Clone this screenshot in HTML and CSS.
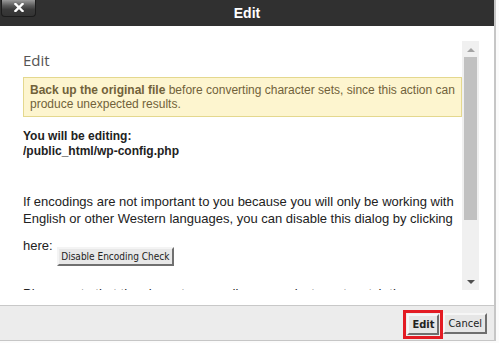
FILE: index.html
```html
<!DOCTYPE html>
<html lang="en">
<head>
    <meta charset="UTF-8">
    <meta name="viewport" content="width=device-width, initial-scale=1.0">
    <title>Edit</title>
    <link rel="stylesheet" href="styles.css">
</head>
<body>
    <div class="dialog">
        <div class="dialog-header">
            <button class="close-btn" title="Close">
                <svg width="10" height="9" viewBox="0 0 10 9"><path d="M1.5 1 L8.5 8 M8.5 1 L1.5 8" stroke="#fff" stroke-width="2.4" stroke-linecap="square"/></svg>
            </button>
            <span class="dialog-title">Edit</span>
            <span></span>
        </div>

        <div class="dialog-body">
            <div class="scroll-area">
                <div class="scroll-content">
                    <h3>Edit</h3>
                    <div class="warning"><b>Back up the original file</b> before converting character sets, since this action can produce unexpected results.</div>
                    <p class="editing"><b>You will be editing:<br>/public_html/wp-config.php</b></p>
                    <p class="info">If encodings are not important to you because you will only be working with English or other Western languages, you can disable this dialog by clicking</p>
                    <p class="here">here: <button class="small-btn">Disable Encoding Check</button></p>
                    <p class="note">Please note that the character encoding you select must match the encoding used in this file.</p>
                </div>
                <div class="scrollbar">
                    <div class="arrow up"></div>
                    <div class="thumb"></div>
                    <div class="arrow down"></div>
                </div>
            </div>
        </div>

        <div class="dialog-footer">
            <span class="highlight"><button class="btn btn-primary">Edit</button></span>
            <button class="btn">Cancel</button>
        </div>
    </div>
</body>
</html>
```

FILE: styles.css
```css
body {
    margin: 0;
    background: #fbfbfb;
    font-family: "Liberation Sans", Arial, sans-serif;
}
.dialog {
    width: 494px;
    height: 340px;
    display: flex;
    flex-direction: column;
    background: #fff;
    border-right: 2px solid #c6c6c6;
    border-bottom: 1px solid #c6c6c6;
}
.dialog-header {
    height: 26px;
    background: #303030;
    display: grid;
    grid-template-columns: 1fr auto 1fr;
}
.dialog-title {
    color: #fff;
    font-weight: bold;
    font-size: 14px;
    line-height: 26px;
}
.close-btn {
    width: 35px;
    height: 17px;
    margin-left: 1px;
    padding: 0;
    border: 1px solid #1c1c1c;
    border-top: none;
    border-radius: 0 0 4px 4px;
    background: linear-gradient(#9a9a9a 0%, #5a5a5a 35%, #3a3a3a 60%, #333 100%);
    display: flex;
    align-items: center;
    justify-content: center;
}
.close-btn svg {
    display: block;
    margin-top: -1px;
}
.dialog-body {
    height: 249px;
    padding: 15px 15px 15px 23px;
}
.scroll-area {
    height: 249px;
    display: flex;
}
.scroll-content {
    width: 439px;
    overflow: hidden;
    color: #222;
    font-size: 12px;
}
.scroll-content h3 {
    margin: 9px 0 0;
    font-family: "Open Sans", sans-serif;
    font-weight: normal;
    font-size: 15px;
    line-height: 20px;
    color: #555;
}
.warning {
    margin-top: 7px;
    padding: 5px 6px;
    line-height: 14px;
    background: #fdf5cf;
    border: 1px solid #e4d88e;
    color: #71623a;
}
.scroll-content p {
    margin: 0;
}
.editing {
    margin-top: 12px !important;
    line-height: 15px;
}
.info,
.here,
.note {
    font-size: 13px;
    line-height: 17px;
}
.info {
    margin-top: 34px !important;
}
.here {
    margin-top: 10px !important;
}
.note {
    margin-top: 19px !important;
}
.small-btn {
    font-family: "DejaVu Sans Condensed", "DejaVu Sans", sans-serif;
    font-stretch: condensed;
    font-size: 10px;
    color: #222;
    background: #e8e8e8;
    border: 2px solid;
    border-color: #f4f4f4 #707070 #707070 #f4f4f4;
    padding: 2px 2px 2px;
    margin-left: 1px;
    vertical-align: -10px;
}
.scrollbar {
    width: 17px;
    background: #f0f0f0;
    display: flex;
    flex-direction: column;
    align-items: center;
}
.arrow {
    width: 0;
    height: 0;
    border-left: 4px solid transparent;
    border-right: 4px solid transparent;
}
.arrow.up {
    margin: 7px 0 5px;
    border-bottom: 4px solid #a3a3a3;
}
.arrow.down {
    margin-top: auto;
    margin-bottom: 6px;
    border-top: 4px solid #505050;
}
.thumb {
    width: 13px;
    height: 163px;
    background: #c1c1c1;
}
.dialog-footer {
    height: 34px;
    background: #ececec;
    border-top: 1px solid #c8c8c8;
    display: flex;
    justify-content: flex-end;
    align-items: center;
    padding-right: 7px;
}
.highlight {
    border: 3px solid #e31b23;
    padding: 1px;
    display: flex;
    margin-top: 2px;
}
.btn {
    font-family: "DejaVu Sans Condensed", "DejaVu Sans", sans-serif;
    font-stretch: condensed;
    font-size: 11px;
    color: #222;
    background: #e6e6e6;
    border: 2px solid;
    border-color: #f6f6f6 #6e6e6e #6e6e6e #f6f6f6;
    padding: 2px 3px;
    height: 21px;
}
.btn-primary {
    font-weight: bold;
}
```
